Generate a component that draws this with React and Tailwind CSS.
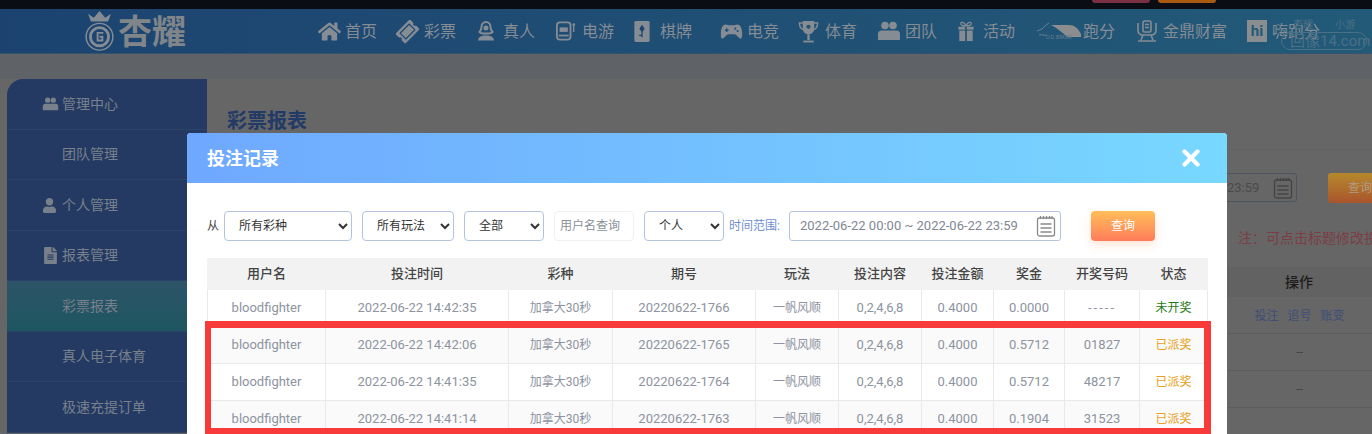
import React from "react";
import { FaHome, FaTicketAlt, FaUser, FaFileAlt } from "react-icons/fa";

const font = { fontFamily: 'Roboto, "Noto Sans CJK SC", sans-serif' };

const Person = () => (
  <svg viewBox="0 0 20 22" className="w-5 h-[22px]" fill="none" stroke="currentColor" strokeWidth="2">
    <path d="M10 2c-3 0-4.500 2.500-4.500 5 0 2-1 4-2 5 1 1 2.500 1.500 3.500 1.500h6c1 0 2.500-.5 3.500-1.500-1-1-2-3-2-5 0-2.500-1.500-5-4.500-5z" />
    <path d="M2 20.500c0-3 3-5 8-5s8 2 8 5z" fill="currentColor" stroke="none" />
    <circle cx="10" cy="8" r="2.500" fill="currentColor" stroke="none" />
  </svg>
);
const Slot = () => (
  <svg viewBox="0 0 24 22" className="w-[22px] h-5" fill="none" stroke="currentColor">
    <rect x="2" y="1.500" width="15" height="19" rx="3.500" strokeWidth="2" />
    <rect x="5" y="7" width="9" height="5" fill="currentColor" stroke="none" />
    <rect x="4" y="15" width="11" height="2" fill="currentColor" stroke="none" />
    <path d="M20.500 5v7" strokeWidth="1.500" />
    <circle cx="20.500" cy="4" r="1.500" fill="currentColor" stroke="none" />
  </svg>
);
const Card = () => (
  <svg viewBox="0 0 16 22" className="w-4 h-[21px]">
    <rect width="16" height="22" rx="1.500" fill="currentColor" />
    <path d="M8 5l2 3-2 3-2-3zM8 10v7M5 15h3" stroke="#1d4470" strokeWidth="1.300" fill="#1d4470" />
  </svg>
);
const Pad = () => (
  <svg viewBox="0 0 24 20" className="w-[23px] h-[19px]">
    <path
      fill="currentColor"
      d="M6 2.500c1.500 0 2.500 1 4 1h4c1.500 0 2.500-1 4-1 3 0 4.500 3 5 7 .5 4 .3 8-1.500 8-2 0-4-4.500-6.500-4.500H9c-2.500 0-4.500 4.500-6.500 4.500C.7 17.500.5 13.500 1 9.500c.5-4 2-7 5-7z"
    />
    <path d="M5 8.500h4M7 6.500v4" stroke="#1f4f73" strokeWidth="1.400" />
    <circle cx="16" cy="7" r="1.100" fill="#1f4f73" />
    <circle cx="18.500" cy="9.500" r="1.100" fill="#1f4f73" />
  </svg>
);
const Cup = () => (
  <svg viewBox="0 0 22 24" className="w-[21px] h-[23px]" fill="none" stroke="currentColor">
    <path d="M5 1h12v8a6 6 0 01-12 0z" fill="currentColor" stroke="none" />
    <path d="M5 3H1.500c0 4 1 6 4 7M17 3h3.500c0 4-1 6-4 7" strokeWidth="1.500" />
    <path d="M11 15v6" strokeWidth="2.500" />
    <path d="M5.500 22.500h11" strokeWidth="2" />
    <circle cx="11" cy="7" r="2.200" fill="#22506f" stroke="none" />
  </svg>
);
const Gift = () => (
  <svg viewBox="0 0 18 22" className="w-[18px] h-[21px]" fill="none" stroke="currentColor">
    <rect x="1" y="6" width="16" height="3" fill="currentColor" stroke="none" />
    <rect x="2" y="10" width="14" height="11" fill="currentColor" stroke="none" />
    <path d="M9 5.500v16" stroke="#23546f" strokeWidth="1.800" />
    <path d="M9 5C7 1 4 .5 3.500 2.500 3 4.500 6 5 9 5zM9 5c2-4 5-4.500 5.500-2.500C15 4.500 12 5 9 5z" strokeWidth="1.300" />
  </svg>
);
const Team = ({ cls = "w-[22px] h-5" }) => (
  <svg viewBox="0 0 22 20" className={cls} fill="currentColor">
    <circle cx="7" cy="4.500" r="3.800" />
    <circle cx="15" cy="4.500" r="3.800" />
    <path d="M0 19v-6c0-2 1.500-3.500 3.500-3.500h15c2 0 3.500 1.500 3.500 3.500v6z" />
  </svg>
);
const Runner = () => (
  <svg viewBox="0 0 46 20" className="w-[46px] h-5" fill="none">
    <path d="M1 10l5-2 4-4 3-2M3 14c3-1 5 1 8 0" stroke="#667f90" strokeWidth="1" />
    <path d="M15 4h18c5 0 9 3 12 9v3H31c-4-4-10-9-16-12z" fill="#8b8d8e" />
    <text x="10" y="18" fontSize="5" fill="#667f90" fontFamily="Roboto">O.D. BRKBR</text>
  </svg>
);
const Ding = () => (
  <svg viewBox="0 0 22 24" className="w-[22px] h-6" fill="none" stroke="currentColor" strokeWidth="1.600">
    <rect x="7" y="2" width="8" height="11" rx="1.500" />
    <path d="M9 5.500h4M9 8.500h4" />
    <path d="M2 4v7c0 3 2 5 5 5h8c3 0 5-2 5-5V4M7 16l-2 5M15 16l2 5M2 22h18" />
  </svg>
);
const Hi = () => (
  <span className="w-5 h-[22px] bg-[#8a8d90] flex items-center justify-center text-[#235a78] text-[15px] font-bold leading-none">
    hi
  </span>
);
const Calendar = ({ color = "#8a8a8a" }) => (
  <svg viewBox="0 0 20 22" className="w-5 h-[22px]" fill="none" stroke={color} strokeWidth="1.300">
    <rect x="1.500" y="3" width="17" height="18" rx="2" />
    <path d="M4.500 1v3M7.500 1v3M10.500 1v3M13.500 1v3M16 1v3M4.500 9h11M4.500 13h11M4.500 17h11" />
  </svg>
);

const navItems = [
  { t: "首页", icon: <FaHome size={23} />, w: "w-[59px]", gap: "gap-[4px]", mr: "mr-5" },
  { t: "彩票", icon: <FaTicketAlt size={21} className="-rotate-45" />, w: "w-[59px]", gap: "gap-[6px]", mr: "mr-5" },
  { t: "真人", icon: <Person />, w: "w-[59px]", gap: "gap-[7px]", mr: "mr-5" },
  { t: "电游", icon: <Slot />, w: "w-[59px]", gap: "gap-[5px]", mr: "mr-5" },
  { t: "棋牌", icon: <Card />, w: "w-[59px]", gap: "gap-[10px]", mr: "mr-[27px]" },
  { t: "电竞", icon: <Pad />, w: "w-[59px]", gap: "gap-[4px]", mr: "mr-[19px]" },
  { t: "体育", icon: <Cup />, w: "w-[60px]", gap: "gap-[6px]", mr: "mr-5" },
  { t: "团队", icon: <Team />, w: "w-[59px]", gap: "gap-[5px]", mr: "mr-5" },
  { t: "活动", icon: <Gift />, w: "w-[59px]", gap: "gap-[8px]", mr: "mr-5" },
  { t: "跑分", icon: <Runner />, w: "w-[80px]", gap: "gap-[1px]", mr: "mr-5" },
  { t: "金鼎财富", icon: <Ding />, w: "w-[91px]", gap: "gap-[5px]", mr: "mr-5" },
  { t: "嗨跑分", icon: <Hi />, w: "w-[76px]", gap: "gap-[5px]", mr: "" },
];

const sideItems = [
  { t: "管理中心", icon: <Team cls="w-[17px] h-[14px]" /> },
  { t: "团队管理" },
  { t: "个人管理", icon: <FaUser size={15} /> },
  { t: "报表管理", icon: <FaFileAlt size={17} /> },
  { t: "彩票报表", active: true },
  { t: "真人电子体育" },
  { t: "极速充提订单" },
];

const headers = ["用户名", "投注时间", "彩种", "期号", "玩法", "投注内容", "投注金额", "奖金", "开奖号码", "状态"];
const widths = [118, 183, 104, 143, 83, 83, 72, 71, 75, 68];
const rows = [
  ["bloodfighter", "2022-06-22 14:42:35", "加拿大30秒", "20220622-1766", "一帆风顺", "0,2,4,6,8", "0.4000", "0.0000", "-----", "未开奖"],
  ["bloodfighter", "2022-06-22 14:42:06", "加拿大30秒", "20220622-1765", "一帆风顺", "0,2,4,6,8", "0.4000", "0.5712", "01827", "已派奖"],
  ["bloodfighter", "2022-06-22 14:41:35", "加拿大30秒", "20220622-1764", "一帆风顺", "0,2,4,6,8", "0.4000", "0.5712", "48217", "已派奖"],
  ["bloodfighter", "2022-06-22 14:41:14", "加拿大30秒", "20220622-1763", "一帆风顺", "0,2,4,6,8", "0.4000", "0.1904", "31523", "已派奖"],
];

const selectCls =
  "h-[30px] bg-white border border-[#b4c4dc] rounded-[4px] pl-[10px] text-[12px] text-[#333] outline-none";

function cellCls(c, j) {
  if (j === 9) return c === "未开奖" ? "text-[12px] text-[#1c7a12]" : "text-[12px] text-[#e8a020]";
  if (j === 2 || j === 4) return "text-[12px]";
  if (c === "-----") return "tracking-[2px]";
  return "";
}

export default function App() {
  return (
    <div className="relative w-full h-[434px] overflow-hidden bg-[#666666]" style={font}>
      {/* top strip */}
      <div className="h-[9px] bg-[#0a0e14] flex justify-end gap-2 pr-[156px]">
        <div className="w-[58px] h-[3px] bg-[#7a2f42] rounded-b-[3px]" />
        <div className="w-[58px] h-[3px] bg-[#a85a10] rounded-b-[3px]" />
      </div>

      {/* header */}
      <header className="h-[45px] bg-gradient-to-r from-[#1c4370] to-[#235a78] border-b border-[#34536c] flex items-center text-[#858c94]">
        <div className="ml-[83px] w-[235px] flex items-center shrink-0">
          <svg viewBox="0 0 34 44" className="w-[33px] h-[42px]" fill="none" stroke="#858c94">
            <path d="M8 12L5 4l6 4 6-7 6 7 6-4-3 8z" fill="#858c94" stroke="none" />
            <circle cx="17" cy="28" r="14" strokeWidth="1.500" />
            <circle cx="17" cy="28" r="9.500" strokeWidth="3" />
            <path d="M21 24h-6v8h5v-4h-3" strokeWidth="2" />
          </svg>
          <span className="text-[34px] leading-none font-bold text-[#80858a] ml-[2px] mt-[2px]">杏耀</span>
        </div>
        <nav className="flex items-center">
          {navItems.map((n) => (
            <div key={n.t} className={`flex items-center shrink-0 ${n.w} ${n.gap} ${n.mr}`}>
              {n.icon}
              <span className="text-[16px] leading-[44px] whitespace-nowrap pt-[2px]">{n.t}</span>
            </div>
          ))}
        </nav>
      </header>
      <div className="absolute top-[18px] left-[1281px] w-[86px] flex flex-col text-[#4a7086] pointer-events-none">
        <div className="flex justify-between px-[12px] text-[10px] leading-[14px]">
          <span>杏耀</span>
          <span>小游</span>
        </div>
        <span className="h-[18px] text-[15px] leading-[16px] pl-[8px] border border-[#4a7086] rounded-[9px] whitespace-nowrap">回像14.com</span>
      </div>

      {/* gray strip */}
      <div className="h-[25px] bg-[#5f6367]" />

      {/* page body */}
      <div className="flex pl-[7px]">
        <aside className="w-[200px] shrink-0 bg-[#243a63] rounded-tl-2xl text-[#78808c] text-[14px]">
          {sideItems.map((s) => (
            <div
              key={s.t}
              className={`h-[50.500px] flex items-center pl-[55px] pt-[1px] relative border-b border-[#2b4269] ${
                s.active ? "bg-gradient-to-b from-[#2d5468] to-[#1c5660]" : ""
              }`}
            >
              {s.icon && <span className="absolute left-[35px]">{s.icon}</span>}
              {s.t}
            </div>
          ))}
        </aside>
        <main className="flex-1 min-w-0 flex flex-col">
          <div className="h-[71px] border-b border-[#616161] pl-5 pt-[27px] text-[20px] leading-[30px] font-bold text-[#223a66]">
            彩票报表
          </div>
          <div className="self-end w-[145px] overflow-hidden">
            <div className="flex items-start pt-[23px] h-[54px]">
              <div className="w-[70px] h-[29px] shrink-0 border border-l-0 border-[#4f5560] rounded-r-[3px] flex items-center justify-between pr-[3px] text-[13px] text-[#4a4a4a]">
                <span>23:59</span>
                <Calendar color="#444" />
              </div>
              <div className="ml-[31px] w-[64px] h-[30px] shrink-0 rounded-[3px] bg-gradient-to-b from-[#b5892c] to-[#a8542c] text-[#b09a80] text-[12px] flex items-center justify-center">
                查询
              </div>
            </div>
            <div className="h-[63px] pl-[11px] pt-[24px] text-[14px] leading-5 text-[#7d3d45] whitespace-nowrap overflow-hidden">注：可点击标题修改投注</div>
            <div className="h-[30px] bg-[#626262] flex items-center justify-center pt-[1px] pr-[1px] text-[14px] font-medium text-[#1c1c1c]">
              操作
            </div>
            <div className="h-[37px] border-b border-[#5c5c5c] flex items-center justify-center gap-[9px] pt-[1px] text-[12px] text-[#3f4e78]">
              <span>投注</span><span>追号</span><span>账变</span>
            </div>
            <div className="h-[37px] border-b border-[#5c5c5c] flex items-center justify-center text-[12px] text-[#444]">--</div>
            <div className="h-[37px] border-b border-[#5c5c5c] flex items-center justify-center text-[12px] text-[#444]">--</div>
          </div>
        </main>
      </div>

      {/* modal */}
      <div className="absolute left-[187px] top-[133px] w-[1040px] h-[400px] bg-white rounded-t-[4px]">
        <div className="h-[50px] rounded-t-[4px] bg-gradient-to-r from-[#6fa8ff] to-[#78d8ff] flex items-center justify-between pl-5 pr-[27px]">
          <span className="text-[18px] font-bold text-white">投注记录</span>
          <svg viewBox="0 0 18 18" className="w-[18px] h-[18px]" stroke="white" strokeWidth="4.200" strokeLinecap="round">
            <path d="M2.500 2.500l13 13M15.500 2.500l-13 13" />
          </svg>
        </div>

        <div className="px-5 pt-7">
          <div className="flex items-center h-[30px]">
            <span className="text-[12px] text-[#444] w-[17px]">从</span>
            <select className={`${selectCls} w-[128px]`} defaultValue="a"><option value="a">所有彩种</option></select>
            <select className={`${selectCls} w-[92px] ml-[10px]`} defaultValue="a"><option value="a">所有玩法</option></select>
            <select className={`${selectCls} w-[80px] ml-[10px]`} defaultValue="a"><option value="a">全部</option></select>
            <input
              placeholder="用户名查询"
              className="w-[80px] h-[30px] ml-[10px] px-[5px] border border-[#f0f0f0] rounded-[4px] text-[12px] outline-none placeholder:text-[#8a8f99]"
            />
            <select className={`${selectCls} w-[80px] ml-[10px]`} defaultValue="a"><option value="a">个人</option></select>
            <span className="text-[12px] text-[#6f8fcf] ml-[5px] w-[60px] whitespace-nowrap">时间范围:</span>
            <div className="w-[272px] h-[30px] border border-[#b4c4dc] rounded-[3px] flex items-center justify-between pl-[10px] pr-[4px] text-[13px] text-[#7f8794]">
              <span>2022-06-22 00:00 ~ 2022-06-22 23:59</span>
              <Calendar />
            </div>
            <button className="w-[64px] h-[30px] ml-[30px] rounded-[4px] bg-gradient-to-b from-[#ffbe58] to-[#ff7b5a] text-white text-[12px] shadow-[0_4px_8px_rgba(255,150,90,0.25)]">
              查询
            </button>
          </div>

          <table className="mt-[17px] w-[1000px] table-fixed border-collapse text-center text-[13px]">
            <colgroup>
              {widths.map((w, i) => (
                <col key={i} style={{ width: w }} />
              ))}
            </colgroup>
            <thead>
              <tr className="h-[31px] bg-[#f2f2f2] text-[#444]">
                {headers.map((h) => (
                  <th key={h} className="font-medium text-[13px] border border-[#f2f2f2]">{h}</th>
                ))}
              </tr>
            </thead>
            <tbody>
              {rows.map((r, i) => (
                <tr key={i} className={`h-[37px] text-[#8d93a0] ${i % 2 ? "bg-[#fafafa]" : "bg-white"}`}>
                  {r.map((c, j) => (
                    <td key={j} className={`border border-[#e9e9e9] p-0 whitespace-nowrap ${cellCls(c, j)}`}>
                      {c}
                    </td>
                  ))}
                </tr>
              ))}
            </tbody>
          </table>
        </div>

        {/* red annotation */}
        <div className="absolute left-[18px] top-[188px] w-[1006px] h-[113px] border-t-[7px] border-r-[7px] border-b-[6px] border-l-[6px] border-[#f93a3a] pointer-events-none" />
      </div>
    </div>
  );
}
